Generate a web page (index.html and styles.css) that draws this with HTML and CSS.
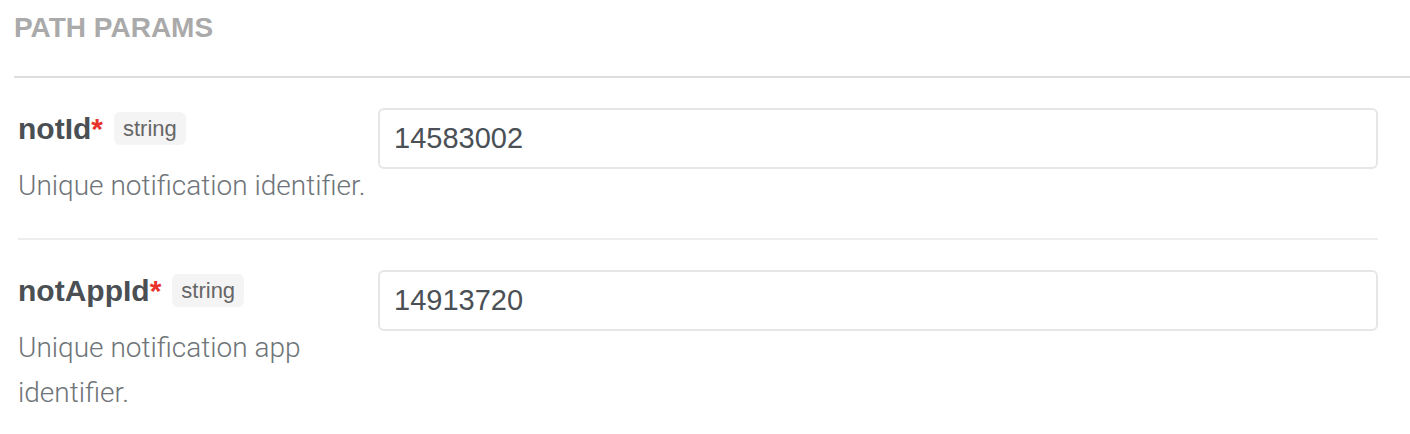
FILE: index.html
```html
<!DOCTYPE html>
<html lang="en">
<head>
<meta charset="utf-8">
<title>Path Params</title>
<link rel="stylesheet" href="styles.css">
</head>
<body>
<section class="params">
  <h2 class="params-title">PATH PARAMS</h2>
  <div class="params-list">
    <div class="param-row">
      <div class="param-info">
        <div class="param-head">
          <span class="param-name">notId<span class="param-required">*</span></span>
          <span class="param-type">string</span>
        </div>
        <p class="param-desc">Unique notification identifier.</p>
      </div>
      <div class="param-field">
        <input class="param-input" type="text" value="14583002">
      </div>
    </div>
    <div class="param-row">
      <div class="param-info">
        <div class="param-head">
          <span class="param-name">notAppId<span class="param-required">*</span></span>
          <span class="param-type">string</span>
        </div>
        <p class="param-desc">Unique notification app identifier.</p>
      </div>
      <div class="param-field">
        <input class="param-input" type="text" value="14913720">
      </div>
    </div>
  </div>
</section>
</body>
</html>
```

FILE: styles.css
```css
html, body {
  margin: 0;
  padding: 0;
  background: #ffffff;
}

body {
  font-family: "Liberation Sans", Arial, Helvetica, sans-serif;
  overflow: hidden;
}

.params {
  padding-left: 14px;
}

.params-title {
  margin: 0;
  padding: 12px 0 32px 0;
  font-size: 28px;
  line-height: 32px;
  font-weight: 700;
  color: #aaaaaa;
  border-bottom: 2px solid #dddddd;
}

.params-list {
  margin-left: 4px;
  width: 1360px;
}

.param-row {
  display: flex;
  align-items: flex-start;
  padding: 30px 0;
  border-bottom: 2px solid #eeeeee;
}

.param-info {
  width: 360px;
  flex: none;
}

.param-head {
  display: flex;
  align-items: center;
  height: 41px;
}

.param-name {
  font-size: 30px;
  font-weight: 700;
  color: #4a4f54;
}

.param-required {
  color: #e8322b;
}

.param-type {
  margin-left: 11px;
  padding: 0 9px;
  height: 33px;
  line-height: 33px;
  border-radius: 6px;
  background: #f4f4f4;
  color: #666666;
  font-size: 22px;
}

.param-desc {
  margin: 14px 0 0;
  font-family: Roboto, "Liberation Sans", sans-serif;
  font-weight: 300;
  font-size: 28px;
  line-height: 45px;
  color: #6e7478;
}

.param-field {
  flex: 1;
}

.param-input {
  box-sizing: border-box;
  display: block;
  width: 100%;
  height: 61px;
  margin: 0;
  padding: 0 14px;
  border: 2px solid #e6e6e6;
  border-radius: 6px;
  background: #ffffff;
  font-family: "Liberation Sans", Arial, sans-serif;
  font-size: 29px;
  color: #4a5055;
  outline: none;
}
```
